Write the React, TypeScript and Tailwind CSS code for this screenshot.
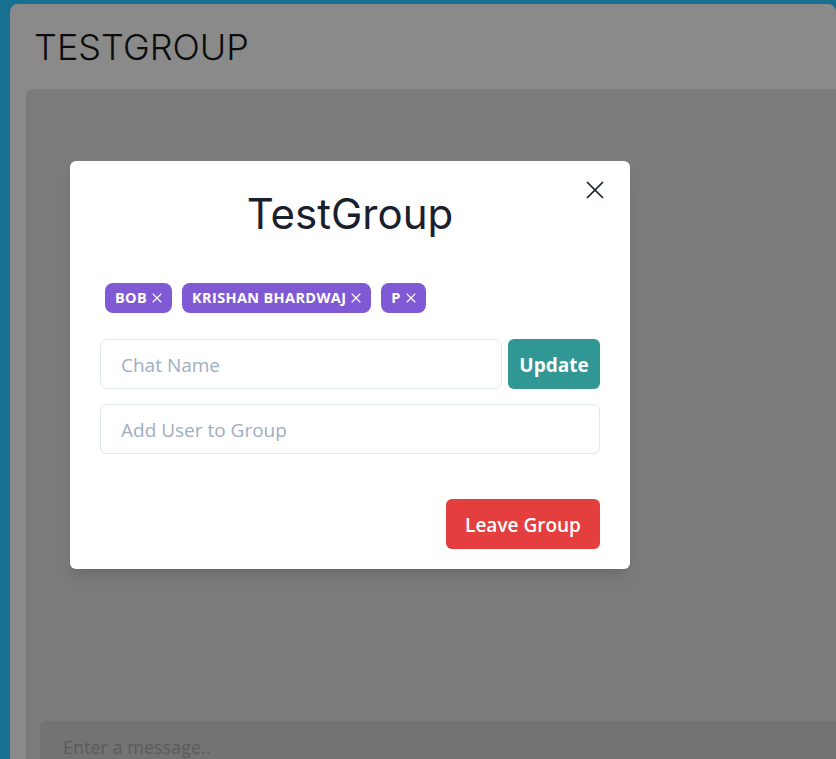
import { X } from "lucide-react";

const members = ["BOB", "KRISHAN BHARDWAJ", "P"];

function Badge({ name }: { name: string }) {
  return (
    <span className="m-[5px] inline-flex h-[30px] items-center gap-[2px] rounded-lg bg-[#805ad5] pl-[10px] pr-[7px] text-[14.5px] font-bold tracking-[0.35px] text-white">
      {name}
      <X size={16} strokeWidth={1.6} />
    </span>
  );
}

export default function App() {
  return (
    <div className="relative h-[759px] w-full overflow-hidden bg-[#17708f] pl-[10px] pt-[4px] font-['Open_Sans',sans-serif]">
      {/* page under the overlay */}
      <div className="flex h-[800px] flex-col rounded-lg bg-[#8a8a8a] pl-[16px]">
        <div className="flex h-[85px] items-center pl-[8px] font-['Inter',sans-serif] text-[36px] font-light text-[#0c0c0c]">
          TESTGROUP
        </div>
        <div className="flex flex-1 flex-col rounded-l-lg bg-[#7b7b7b] pl-[14px] pt-[632px]">
          <div className="flex h-[60px] items-start rounded-l-md bg-[#737373] pl-[23px] pt-[13px] text-[18px] text-[#5b5b5b]">
            Enter a message..
          </div>
        </div>
      </div>

      {/* modal */}
      <div className="absolute left-[70px] top-[161px] w-[560px] rounded-md bg-white pb-[20px] shadow-lg">
        <button className="absolute left-[510px] top-[14px] flex h-[30px] w-[30px] items-center justify-center text-[#1a202c]">
          <X size={30} strokeWidth={1.4} />
        </button>
        <div className="flex justify-center pt-[26px] font-['Inter',sans-serif] text-[42px] font-normal leading-[54px] text-[#1a202c]">
          TestGroup
        </div>
        <div className="px-[30px]">
          <div className="mt-[37px] flex flex-wrap">
            {members.map((m) => (
              <Badge key={m} name={m} />
            ))}
          </div>
          <div className="mt-[21px] flex gap-[6px]">
            <div className="flex h-[50px] flex-1 items-center rounded-md border border-[#e2e8f0] pl-[20px] pt-[3px] text-[19px] text-[#a0aec0]">
              Chat Name
            </div>
            <button className="h-[50px] w-[92px] rounded-md bg-[#319795] pt-[3px] text-[19px] font-bold text-white">
              Update
            </button>
          </div>
          <div className="mt-[15px] flex h-[50px] items-center rounded-md border border-[#e2e8f0] pl-[20px] pt-[3px] text-[19px] text-[#a0aec0]">
            Add User to Group
          </div>
          <div className="mt-[45px] flex justify-end">
            <button className="h-[50px] w-[154px] rounded-md bg-[#e53e3e] pt-[2px] text-[19px] font-semibold text-white">
              Leave Group
            </button>
          </div>
        </div>
      </div>
    </div>
  );
}
